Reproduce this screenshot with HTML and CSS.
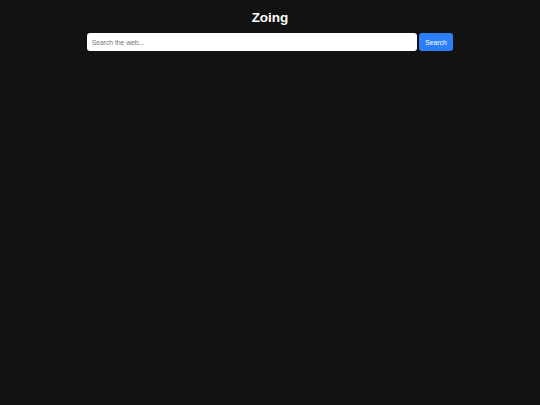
FILE: index.html
```html
<!DOCTYPE html>
<html lang="en">
<head>
<meta charset="utf-8">
<title>Zoing</title>
<link rel="stylesheet" href="styles.css">
</head>
<body>
<main class="page">
  <h1 class="title">Zoing</h1>
  <form class="search" onsubmit="return false;">
    <input class="search-input" type="text" placeholder="Search the web...">
    <button class="search-btn" type="submit">Search</button>
  </form>
</main>
</body>
</html>
```

FILE: styles.css
```css
html, body {
  margin: 0;
  padding: 0;
  background: #121212;
  height: 100%;
}
body {
  font-family: "Liberation Sans", Arial, sans-serif;
  color: #fff;
}
.page {
  display: flex;
  flex-direction: column;
  align-items: center;
  padding-top: 9.5px;
}
.title {
  margin: 0;
  font-size: 13.5px;
  font-weight: bold;
  line-height: normal;
  color: #fff;
}
.search {
  margin-top: 8.5px;
  width: 366.6px;
  display: flex;
  gap: 2px;
}
.search-input {
  flex: 1;
  height: 18px;
  box-sizing: border-box;
  border: none;
  border-radius: 3px;
  padding: 0 5px;
  font-family: inherit;
  font-size: 6.75px;
  background: #fff;
  color: #222;
  outline: none;
}
.search-input::placeholder {
  color: #777;
}
.search-btn {
  height: 18px;
  box-sizing: border-box;
  border: none;
  border-radius: 3px;
  padding: 0 6.6px;
  background: #2d7ff9;
  color: #fff;
  font-family: inherit;
  font-size: 6.75px;
  cursor: pointer;
}
```
